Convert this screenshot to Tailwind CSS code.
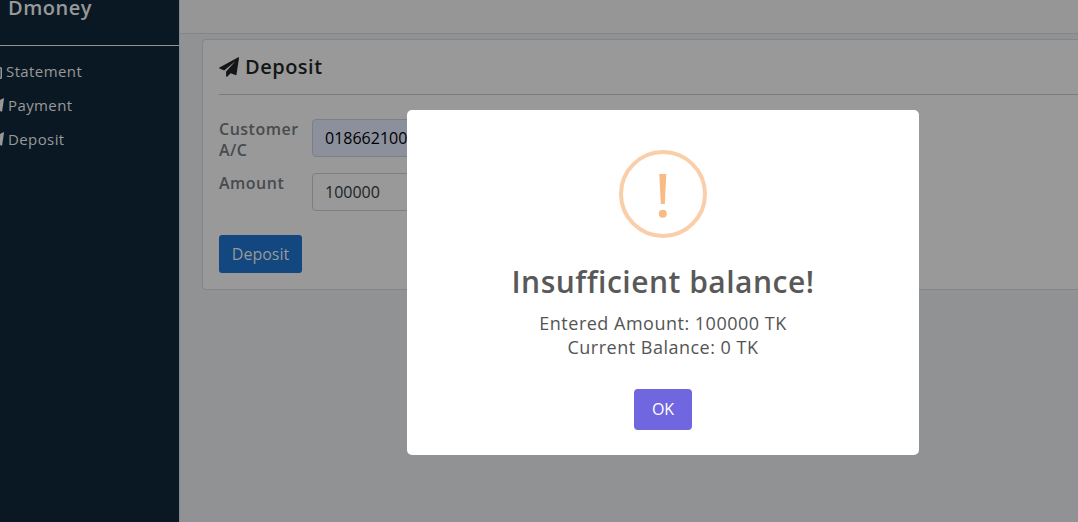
<!DOCTYPE html>
<html lang="en">
<head>
<meta charset="utf-8">
<title>Dmoney</title>
<script src="https://cdn.jsdelivr.net/npm/@tailwindcss/browser@4"></script>
</head>
<body class="h-[522px] w-[1078px] overflow-hidden bg-[#919294] font-['Open_Sans','Noto_Sans',sans-serif]">
<svg class="hidden"><symbol id="plane" viewBox="0 0 20 20"><path fill="currentColor" d="M19.300 .2Q20.100 0 20 .9L17.500 17.500Q17.300 18.400 16.400 18.100L11.600 16.200L8.500 19.600Q7.100 20.300 7.100 18.800V14.600L16.600 4L5.200 13.500L.5 11.500Q-.4 11 .5 10.500Z"/></symbol></svg>
<div class="flex h-full">
  <aside class="h-full w-[180px] shrink-0 overflow-hidden border-r border-[#85888b] bg-[#0a1824] text-[#999999]">
    <div class="flex h-[46px] items-start border-b border-[#919395] pl-2">
      <div class="text-[20px] leading-4 font-semibold tracking-[0.5px]">Dmoney</div>
    </div>
    <nav class="flex flex-col pt-2 text-[15px] leading-[34px] tracking-[0.4px]">
      <a class="flex items-center whitespace-nowrap"><svg class="mt-1 mr-1 -ml-[10px] h-3 w-3 shrink-0" viewBox="0 0 12 12" fill="none" stroke="currentColor" stroke-width="1.500"><path d="M2 .75h8.400q.85 0 .85 .85v8.800q0 .85-.85 .85H2z"/></svg>Statement</a>
      <a class="flex items-center whitespace-nowrap"><svg class="mr-1 -ml-[11px] h-[15px] w-[15px] shrink-0"><use href="#plane"/></svg>Payment</a>
      <a class="flex items-center whitespace-nowrap"><svg class="mr-1 -ml-[11px] h-[15px] w-[15px] shrink-0"><use href="#plane"/></svg>Deposit</a>
    </nav>
  </aside>
  <main class="min-w-0 flex-1 overflow-hidden">
    <header class="h-[34px] border-b border-[#838587] bg-[#969696]"></header>
    <section class="mt-[5px] ml-[22px] h-[251px] w-[1000px] rounded border border-[#838587] bg-[#999999] px-4">
      <h1 class="flex h-[55px] items-center border-b border-[#7a7a7a] text-[20px] font-semibold tracking-[0.5px] text-[#141517]"><svg class="mr-[6px] h-5 w-5"><use href="#plane"/></svg>Deposit</h1>
      <div class="mt-6 flex h-[38px]">
        <label class="w-[93px] text-[16px] leading-[21px] font-semibold tracking-[0.5px] text-[#474b4e]">Customer A/C</label>
        <div class="flex w-[400px] items-center rounded border border-[#7b7f86] bg-[#8b909c] pl-3 text-[16px] text-black">018662100</div>
      </div>
      <div class="mt-4 flex h-[38px]">
        <label class="w-[93px] text-[16px] leading-[21px] font-semibold tracking-[0.5px] text-[#474b4e]">Amount</label>
        <div class="flex w-[400px] items-center rounded border border-[#7b7e82] bg-[#999999] pl-3 text-[16px] text-[#202325]">100000</div>
      </div>
      <button class="mt-6 flex h-[38px] w-[83px] items-center justify-center rounded-[3px] bg-[#12477f] text-[16px] text-[#999999]">Deposit</button>
    </section>
  </main>
</div>
<div class="absolute top-[110px] left-[407px] flex h-[345px] w-[512px] flex-col items-center rounded-[5px] bg-white pt-10" role="dialog">
  <svg class="h-[88px] w-[88px]" viewBox="0 0 88 88"><circle cx="44" cy="44" r="42" fill="none" stroke="#facea8" stroke-width="4"/><path d="M40.300 24h7l-1.500 30h-4z" fill="#f8bb86"/><circle cx="43.800" cy="63.800" r="4" fill="#f8bb86"/></svg>
  <h2 class="mt-[23px] text-[30px] leading-[42px] font-semibold tracking-[0.5px] text-[#595959]">Insufficient balance!</h2>
  <p class="mt-[8px] text-center text-[18px] leading-6 tracking-[0.5px] text-[#545454]">Entered Amount: 100000 TK<br>Current Balance: 0 TK</p>
  <button class="mt-[30px] flex h-[41px] w-[58px] items-center justify-center rounded bg-[#7066e0] pb-0.5 text-[16px] text-white">OK</button>
</div>
</body>
</html>
